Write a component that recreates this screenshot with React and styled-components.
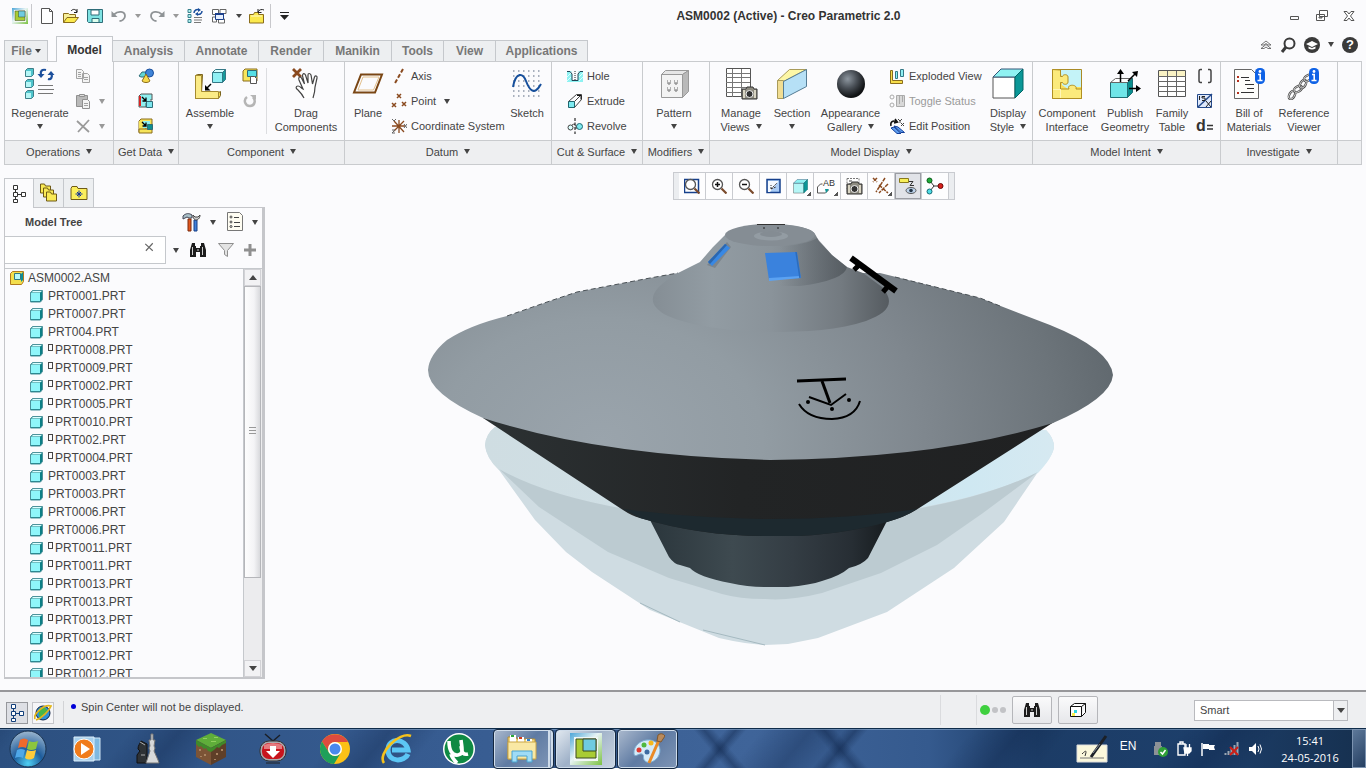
import React, { useState } from 'react';
import styled, { createGlobalStyle, css } from 'styled-components';

/* ---------- small drawings ---------- */

const Svg = ({ s = 16, w, h, box, children }) => (
  <svg width={w || s} height={h || s} viewBox={box || `0 0 ${w || s} ${h || s}`} fill="none" aria-hidden="true">
    {children}
  </svg>
);

const CreoLogo = ({ s = 16 }) => (
  <Svg s={s} box="0 0 32 32">
    <defs>
      <linearGradient id="logoEdge" x1="0" y1="0" x2="1" y2="1">
        <stop offset="0" stopColor="#4da6d8" />
        <stop offset="0.45" stopColor="#e8f4f4" />
        <stop offset="1" stopColor="#7cc242" />
      </linearGradient>
    </defs>
    <rect width="32" height="32" fill="url(#logoEdge)" />
    <path d="M4 4h24v24H4z" fill="#f1f7f3" />
    <path d="M6 6h20v19H6z" fill="#a9cc34" stroke="#3b4a20" />
    <path d="M13 6h13v12H13z" fill="#6fcbe0" stroke="#3b4a20" />
  </Svg>
);

const NewIcon = () => (
  <Svg>
    <path d="M2.5.5h8l3 3v12h-11z" fill="#fff" stroke="#555" />
    <path d="M10.5.5v3h3" stroke="#555" />
  </Svg>
);

const OpenIcon = () => (
  <Svg>
    <path d="M.5 14.5v-9h5l1 1h6v3" fill="#f7ef9a" stroke="#8a6d1c" />
    <path d="M.5 14.5 4 9.5h11.5l-4 5z" fill="#fbe94d" stroke="#8a6d1c" />
    <path d="M8 3c2-2.500 5-2 6 1m0-3v3.500h-3" stroke="#222" />
  </Svg>
);

const SaveIcon = () => (
  <Svg>
    <path d="M.5 1.500h15v13h-14l-1-1z" fill="#7fe3e3" stroke="#2f6d78" />
    <path d="M4 2h8v5H4z" fill="#fff" stroke="#2f6d78" />
    <path d="M5 10.500h7v4H5z" fill="#dfe" stroke="#2f6d78" />
  </Svg>
);

const UndoIcon = ({ flip }) => (
  <Svg>
    <g transform={flip ? 'translate(16 0) scale(-1 1)' : undefined}>
      <path d="M.5 3v6h6z" fill="#8f9396" />
      <path d="M3 6.500C7 2.500 14 3 14 8c0 3-3 5-5.500 5" stroke="#8f9396" strokeWidth="1.800" />
    </g>
  </Svg>
);

const SyncIcon = () => (
  <Svg>
    <path d="M1 1.500h3v3H1zM1 6.500h3v3H1zM1 11.500h3v3H1z" fill="#aef0f0" stroke="#39808c" />
    <path d="M7 5c0-3 3-4 5-3M15 3c0 3-3 4-5 3" stroke="#1b4f9c" strokeWidth="1.500" />
    <path d="M11 0l3 2-3 2zM11 4 8 6l3 2z" fill="#1b4f9c" />
    <path d="M7 9.500h8M7 12h8M7 14.500h7" stroke="#777" />
  </Svg>
);

const WindowsIcon = () => (
  <Svg>
    <path d="M1.500 1.500h6v5h-6zM9 1.500h6v4H9zM1.500 9h4v5h-4zM7.500 11h6v4h-6z" fill="#fff" stroke="#666" />
    <path d="M4.500 5.500h8v6h-8z" fill="#e6f0ff" stroke="#1b3f8c" />
    <path d="M4 5h9v2H4z" fill="#1b3f8c" />
  </Svg>
);

const FolderUpIcon = () => (
  <Svg>
    <path d="M.5 15V6.500h4l1-2h4v2h5V15z" fill="#fbe94d" stroke="#8a6d1c" />
    <path d="M2 8h11" stroke="#fffbd0" />
    <path d="M9 4c1-2.500 4-3 6-2M9 1v3.500h3.500" stroke="#222" />
  </Svg>
);

const RegenIcon = () => (
  <Svg w={30} h={32}>
    {[0, 11, 22].map((y) => (
      <g key={y}>
        <path d={`M.5 ${y + 2.5}l2-2h6v6l-2 2h-6z`} fill="#4fc4cc" stroke="#3f7f89" />
        <path d={`M1 ${y + 3}h5v5H1z`} fill="#b5f6f6" />
      </g>
    ))}
    <path d="M16 7c-1-4 1-6 5-5M26 5c2 4 0 7-3 6" stroke="#1b4f9c" strokeWidth="2.200" />
    <path d="M12.500 6h7L16 10zM22.500 7h7L26 3z" fill="#1b4f9c" />
    <path d="M13 17.500h15M13 21.500h16M13 25.500h15" stroke="#777" />
  </Svg>
);

const CopyIcon = () => (
  <Svg>
    <path d="M1.500 1.500h5l2 2v7h-7zM7.500 5.500h5l2 2v7h-7z" fill="#f4f4f4" stroke="#a3a3a3" />
    <path d="M3 4.500h3M3 6.500h3M3 8.500h3M9 9.500h4M9 11.500h4" stroke="#a3a3a3" />
  </Svg>
);

const PasteIcon = () => (
  <Svg>
    <path d="M1.500 2.500h11v11h-11z" fill="#b9b9b9" stroke="#909090" />
    <path d="M4.500 1.500h5v2h-5z" fill="#ddd" stroke="#909090" />
    <path d="M7.500 6.500h5l2 2v7h-7z" fill="#f4f4f4" stroke="#909090" />
    <path d="M9 10.500h4M9 12.500h4" stroke="#a3a3a3" />
  </Svg>
);

const CrossIcon = ({ s = 16, c = '#9a9a9a' }) => (
  <Svg s={s} box="0 0 16 16">
    <path d="M2 3l12 11M14 2 3 14" stroke={c} strokeWidth="1.800" />
  </Svg>
);

const ShapesIcon = () => (
  <Svg>
    <path d="M1 8l3-4h6l-2 5H3z" fill="#5fd6d6" stroke="#2f6d78" />
    <circle cx="11.500" cy="5" r="4" fill="#3f84d8" stroke="#1b4f9c" />
    <path d="M8 6l4 7c-2 2-6 2-8 0z" fill="#f6d94d" stroke="#8a6d1c" />
  </Svg>
);

const ImportIcon = ({ gold }) => (
  <Svg>
    <path d="M1 3l2-2h11v6H8v7H1z" fill={gold ? '#f6e45a' : '#8ff0f0'} stroke={gold ? '#8a6d1c' : '#555'} />
    <path d="M1 3h2v10H1z" fill={gold ? '#f6e45a' : '#d22'} />
    {gold && <path d="M1 11h13v4H1z" fill="#f6e45a" stroke="#8a6d1c" />}
    <path d="M5 3h7v7H5z" fill="#8ff0f0" />
    <path d={gold ? 'M9.500 6.500h5v5h-5z' : 'M8.500 8.500h6v6h-6z'} fill={gold ? '#0e8f8f' : '#7be6ee'} stroke="#2f6d78" />
    <path d="M4 4l4 4m0-3.500V8H4.500" stroke="#000" strokeWidth="1.300" />
  </Svg>
);

const AssembleIcon = () => (
  <Svg w={32} h={32}>
    <path d="M1.500 7.500l2-1h5l-1 18h17l2-1v4l-2 3h-23z" fill="#f6dd4a" stroke="#7b6420" />
    <path d="M1.500 7.500h6v16h17v7h-23z" fill="#fbeb86" stroke="#a58b30" />
    <path d="M18.500 4.500h10v10h-10z" fill="#8ff0f4" stroke="#347886" />
    <path d="M18.500 4.500l3-3h10l-3 3z" fill="#d9ffff" stroke="#347886" />
    <path d="M28.500 4.500l3-3v10l-3 3z" fill="#149a9a" stroke="#347886" />
    <path d="M17 16l-5 5" stroke="#000" strokeWidth="1.500" />
    <path d="M11 17v5.500h5.500z" fill="#000" />
  </Svg>
);

const AsmPartIcon = () => (
  <Svg>
    <path d="M1 3l2-2h12v12H1z" fill="#f8e65c" stroke="#8a6d1c" />
    <path d="M5.500 2.500h9v6h-9z" fill="#55dfe6" stroke="#2f6d78" />
    <path d="M8.500 8.500h4l2 2v5h-6z" fill="#fff" stroke="#555" />
  </Svg>
);

const RotateIcon = () => (
  <Svg>
    <path d="M5 4C1 7 3 13 8 13s6-6 3-9" stroke="#b5b5b5" strokeWidth="2.500" />
    <path d="M8 2h6v5z" fill="#b5b5b5" />
  </Svg>
);

const HandIcon = () => (
  <Svg w={32} h={34}>
    <path d="M3 2l8 8M11 2 3 10" stroke="#8a4a1f" strokeWidth="2.800" />
    <path
      d="M14 31c-2-4-4-6-6-8-3-2-2-4 0-4s3 2 5 3L9 13c-1-3 1-4 2.500-2l3 6-2-8c0-3 2-3 3-1l2.500 8L18 8c0-2 2-2 3 0l1.500 9 2-7c1-2 3-1 2.500 1l-2 9c0 5-1 8-2 11"
      fill="#fff"
      stroke="#444"
      strokeWidth="1.200"
    />
  </Svg>
);

const PlaneIcon = () => (
  <Svg w={32} h={32}>
    <path d="M9 6.500h21l-7 18H2z" stroke="#7a4614" strokeWidth="2" />
    <path d="M11 9h16l-5.500 13H6z" stroke="#e3c08c" />
  </Svg>
);

const AxisIcon = () => (
  <Svg>
    <path d="M12 1 4 15" stroke="#8a4a1f" strokeWidth="2" strokeDasharray="4 2" />
  </Svg>
);

const PointIcon = () => (
  <Svg>
    <path d="M6 1l4 4M10 1 6 5M1 10l4 4M5 10l-4 4M11 9l4 4M15 9l-4 4" stroke="#8a4a1f" strokeWidth="1.500" />
  </Svg>
);

const CsysIcon = () => (
  <Svg>
    <path d="M1 8h13M8 2v13M3 3l10 11M13 3 3 13" stroke="#8a4a1f" strokeWidth="1.300" />
    <path d="M1 1l2 2 2-2M13 6l3 4M16 6l-3 4M1 12h3l-3 3h3" stroke="#666" />
  </Svg>
);

const SketchIcon = () => (
  <Svg w={32} h={32}>
    {[3, 8, 13, 18, 23, 28].map((y) => (
      <path key={y} d={`M2 ${y}h29`} stroke="#8d98a8" strokeWidth="1.500" strokeDasharray="1.500 3.500" />
    ))}
    <path d="M2 19C5 3 12 5 15 13s8 16 15 3" stroke="#164f9c" strokeWidth="2" />
  </Svg>
);

const HoleIcon = () => (
  <Svg>
    <path d="M0 3h5v11H0zM11 3h5v11h-5zM5 12h6v2H5z" fill="#8ef2f2" />
    <path d="M0 9l4-4M0 13l4-4M12 9l4-4M12 13l4-4" stroke="#d7ffff" />
    <path d="M0 3.500h3l2 2.500v6.500h6V6l2-2.500h3" fill="#fbfbfd" stroke="#245" />
    <path d="M8 3v9" stroke="#222" strokeDasharray="1 1" />
  </Svg>
);

const ExtrudeIcon = () => (
  <Svg>
    <path d="M1.500 8.500h6v6h-6z" fill="#7eeaf0" stroke="#1e6670" />
    <path d="M1.500 8.500l8-7h5v5l-7 8M7.500 8.500l6-6" stroke="#444" />
    <path d="M10 2.500h4v4" stroke="#111" />
  </Svg>
);

const RevolveIcon = () => (
  <Svg>
    <circle cx="3.500" cy="9.500" r="2.500" fill="#dff" stroke="#444" />
    <circle cx="12.500" cy="8.500" r="3" fill="#7eeaf0" stroke="#1e6670" />
    <path d="M5 7c2-2 5 0 4 4" stroke="#444" />
    <path d="M8 0v16" stroke="#000" strokeDasharray="3 1.500" />
  </Svg>
);

const PatternIcon = () => (
  <Svg w={32} h={32}>
    <path d="M3.500 6.500h21v23h-21z" fill="#f3f3f3" stroke="#999" />
    <path d="M3.500 6.500l4-4h23l-6 4z" fill="#e6e6e6" stroke="#999" />
    <path d="M24.500 6.500l6-4v21l-6 6z" fill="#b9b9b9" stroke="#999" />
    {[[9, 13], [16, 13], [9, 20], [16, 20]].map(([x, y]) => (
      <path key={`${x}-${y}`} d={`M${x} ${y}h1M${x + 3} ${y}h1M${x} ${y + 2}h4M${x + 1} ${y + 3}h2`} stroke="#999" strokeWidth="1.500" />
    ))}
  </Svg>
);

const Camera = ({ x = 0, y = 0 }) => (
  <g transform={`translate(${x} ${y})`}>
    <path d="M0 3h4l1-2h6l1 2h3v10H0z" fill="#8d8b80" stroke="#333" />
    <path d="M1 4h2v8H1zM12 4h2v8h-2z" fill="#d9d5c4" />
    <circle cx="7.500" cy="8" r="3.500" fill="#333" stroke="#eee" />
  </g>
);

const ManageIcon = () => (
  <Svg w={34} h={34}>
    <path d="M2.500 1.500h24v28h-24z" fill="#fff" stroke="#555" />
    <path d="M2 6.500h24M2 10.500h24M2 15.500h24M2 20.500h24M2 25.500h24M8.500 2v28M17.500 2v28" stroke="#777" />
    <Camera x={18} y={19} />
  </Svg>
);

const SectionIcon = () => (
  <Svg w={32} h={32}>
    <path d="M1.500 12.500l12-11h17l-23 12z" fill="#fdf7a6" stroke="#a99b5a" />
    <path d="M1.500 12.500h6v18h-6z" fill="#f1dd92" stroke="#a99b5a" />
    <path d="M7.500 13.500l23-12v17l-23 12z" fill="#b6e0f6" stroke="#557c94" />
  </Svg>
);

const BallIcon = () => (
  <Svg w={32} h={32}>
    <defs>
      <radialGradient id="ball" cx="0.38" cy="0.32" r="0.65">
        <stop offset="0" stopColor="#8d969f" />
        <stop offset="0.5" stopColor="#4a5057" />
        <stop offset="1" stopColor="#101214" />
      </radialGradient>
    </defs>
    <circle cx="16" cy="16" r="14" fill="url(#ball)" />
  </Svg>
);

const ExplodedIcon = () => (
  <Svg>
    <path d="M1.500 2.500h2v10h10v3h-12z" fill="#f6dd4a" stroke="#8a6d1c" />
    <path d="M6.500 3.500h2v7h-2zM11.500 1.500h3v7h-3z" fill="#8ff0f4" stroke="#347886" />
  </Svg>
);

const ToggleIcon = () => (
  <Svg>
    <circle cx="3" cy="4" r="2" stroke="#aaa" />
    <circle cx="3" cy="12" r="2" stroke="#aaa" />
    <path d="M7.500 2.500h8v11h-8z" fill="#d8d8d8" stroke="#aaa" />
    <path d="M10.500 3v8M13.500 3v6" stroke="#aaa" />
  </Svg>
);

const EditPosIcon = () => (
  <Svg>
    <path d="M2 8C1 4 4 2 7 3.500M6 1l2.500 3-3.500 1" stroke="#111" strokeWidth="1.500" />
    <path d="M9 1l2 2 2-2M11 3v2M12 5l3 3M15 5l-3 3" stroke="#444" />
    <path d="M5 8l7 6.500h3.500L9 9z" fill="#5e9ef0" stroke="#123f9a" />
    <path d="M2 10l6 5.500h4L5 9z" fill="#5e9ef0" stroke="#123f9a" />
  </Svg>
);

const DisplayIcon = ({ s = 32, front = '#fff' }) => (
  <Svg s={s} box="0 0 32 32">
    <path d="M1 9h22v21H1z" fill={front} stroke="#555" />
    <path d="M1 9l8-8h22l-8 8z" fill="#8ff2f2" stroke="#357" />
    <path d="M23 9l8-8v21l-8 8z" fill="#0b9797" stroke="#066" />
  </Svg>
);

const PuzzleIcon = () => (
  <Svg w={32} h={32}>
    <path d="M1.500 1.500h29v29h-29z" fill="#fbe05a" stroke="#a98a26" />
    <path d="M9 2h21v17H19l-2 2-6-4V9z" fill="#c4f3f8" />
    <path
      d="M9.500 2v6.500h2C12 6 17 6 17 9v5c0 3-5 3-5.500.5h-2V21H18c-3-5 9-5 7 0h5.500v9.500h-29V1.500z"
      fill="#fbea7c"
      stroke="#b08f22"
    />
    <path d="M9.500 21v9M2 21.500h7" stroke="#fff6b8" />
  </Svg>
);

const PublishIcon = () => (
  <Svg w={32} h={32}>
    <path d="M1.500 14.500h17v15h-17z" fill="#6fe5e8" stroke="#1f6d74" />
    <path d="M1.500 14.500l5-4h17l-5 4z" fill="#fff" stroke="#666" />
    <path d="M18.500 14.500l5-4v14l-5 5z" fill="#0b8f8f" stroke="#1f6d74" />
    <path d="M11.500 14V4M19 13l8-8M20 20.500h9" stroke="#000" strokeWidth="1.500" />
    <path d="M8 6l3.500-5L15 6zM23 4l6-1-1 6zM27 17l5 3.500-5 3.500z" fill="#000" />
  </Svg>
);

const TableIcon = () => (
  <Svg w={32} h={32}>
    <path d="M2.500 2.500h27v26h-27z" fill="#fff" stroke="#555" />
    <path d="M3 3h26v5H3z" fill="#f9f2c4" />
    <path d="M2 8.500h28M2 13.500h28M2 18.500h28M2 23.500h28M11.500 3v26M20.500 3v26" stroke="#666" />
  </Svg>
);

const ParensIcon = () => (
  <Svg>
    <path d="M5 1.500H3.500q-1.500 0-1.500 2v9q0 2 1.500 2H5M11 1.500h1.500q1.500 0 1.500 2v9q0 2-1.500 2H11" stroke="#444" strokeWidth="1.500" />
  </Svg>
);

const RelationIcon = () => (
  <Svg>
    <path d="M.5 1.500h14v13H.5z" fill="#dfe9fb" stroke="#244a8c" />
    <path d="M1 14 15 1" stroke="#244a8c" strokeWidth="1.500" />
    <path d="M2.500 3v4M5 3.500h3M5 3.500V5h3v2.500H5M9 8l5 6M14 8l-5 6" stroke="#222" />
  </Svg>
);

const DimIcon = () => (
  <Svg w={18} h={20}>
    <SvgText x="0" y="15" fontSize="16" fontWeight="bold">d</SvgText>
    <path d="M11 9.500h6M11 13h6" stroke="#333" strokeWidth="1.500" />
  </Svg>
);

const InfoBadge = () => (
  <g>
    <rect x="22" y="0" width="10" height="16" rx="4.500" fill="#0f62e6" />
    <circle cx="27" cy="3.500" r="1.400" fill="#fff" />
    <path d="M25 6.500h2.200V12M24.500 12.500h5" stroke="#fff" strokeWidth="1.600" />
  </g>
);

const BomIcon = () => (
  <Svg w={32} h={32}>
    <path d="M1.500 1.500h17l7 7v22h-24z" fill="#fdfdfb" stroke="#666" />
    <path d="M8 9.500h8M12 16.500h9M14 20.500h7M8 24.500h13M12 12.500h5" stroke="#333" />
    <path d="M4 8h2v2H4zM4 12h2v2H4zM4 24h2v2H4z" fill="#b5301f" />
    <InfoBadge />
  </Svg>
);

const ChainIcon = () => (
  <Svg w={34} h={32} box="0 0 34 32">
    {[[5, 27], [11, 21], [16, 16], [21, 10]].map(([x, y], i) => (
      <g key={x} transform={`rotate(${i % 2 ? -30 : -60} ${x} ${y})`}>
        <ellipse cx={x} cy={y} rx="4.500" ry="2.600" stroke="#4c4c4c" strokeWidth="2.400" />
        <ellipse cx={x} cy={y} rx="4.500" ry="2.600" stroke="#e8e8e8" strokeWidth="0.800" />
      </g>
    ))}
    <InfoBadge />
  </Svg>
);

const TreeIcon = ({ c = '#333' }) => (
  <Svg w={14} h={18}>
    <path d="M1.500.5h4v4h-4zM1.500 7.500h4v4h-4zM1.500 14.500h4v3h-4zM9.500 7.500h4v4h-4z" fill="#fff" stroke={c} />
    <path d="M3.500 5v2M3.500 12v2M6 9.500h3" stroke={c} />
  </Svg>
);

const FoldersIcon = () => (
  <Svg w={20} h={20}>
    {[[1, 0], [4, 4], [7, 8]].map(([x, y]) => (
      <path key={x} d={`M${x + 0.5} ${y + 10}V${y + 1}h4l1 2h5v7z`} fill="#f9ea55" stroke="#6f5a17" />
    ))}
  </Svg>
);

const StarFolderIcon = () => (
  <Svg w={18} h={16}>
    <path d="M1 14.500V3.500l1-2h5l1 2h9v11z" fill="#fbee5c" stroke="#6f5a17" />
    <path d="M9 5.500v7M5.500 9h7M7 7l4 4M11 7l-4 4" stroke="#12349c" />
  </Svg>
);

const ToolsIcon = () => (
  <Svg w={20} h={20}>
    <path d="M1 4c3-3 6-3 9-1v3H7L5 5 1 7z" fill="#a9c0c8" stroke="#445" />
    <path d="M6 7h3v12H6z" fill="#e2571e" stroke="#7a2a0c" />
    <path d="M12 8h3v11h-3z" fill="#3f7fd8" stroke="#173f86" />
    <path d="M11 3c0 4 2 5 3 5s4-1 4-5l-2 2h-3z" fill="#ccc" stroke="#444" />
  </Svg>
);

const ListIcon = () => (
  <Svg w={18} h={20}>
    <path d="M1.500.5h12l3 3v15h-15z" fill="#fffdf2" stroke="#777" />
    <path d="M8 5.500h5M8 10.500h6M8 14.500h6" stroke="#444" />
    <circle cx="5" cy="5" r="1" stroke="#444" />
    <circle cx="5" cy="10" r="1" stroke="#444" />
    <circle cx="5" cy="14.500" r="1" stroke="#444" />
  </Svg>
);

const BinocularIcon = () => (
  <Svg w={18} h={16}>
    <path d="M3 1h3v3h1v11H1V8zM15 1h-3v3h-1v11h6V8zM7 6h4v4H7z" fill="#1c1c1c" />
    <path d="M3.500 5v8M13.500 5v8M9 7v2" stroke="#cfcfcf" />
  </Svg>
);

const FunnelIcon = () => (
  <Svg>
    <path d="M.5 1.500h15l-6 7v6l-3-2v-4z" fill="#e3e3e3" stroke="#8e8e8e" />
  </Svg>
);

const PlusIcon = () => (
  <Svg w={12} h={12}>
    <path d="M6 0v12M0 6h12" stroke="#909090" strokeWidth="3" />
  </Svg>
);

const CubeIcon = () => (
  <Svg w={14} h={14}>
    <path d="M.5 3.500l2-2h10v9l-2 2.500H.5z" fill="#0c7f86" stroke="#4d929b" />
    <path d="M1 4h9v8H1z" fill="#8ff6fa" />
    <path d="M1 3.500 3 2h9l-2 1.500z" fill="#dcffff" />
  </Svg>
);

const AsmIcon = () => (
  <Svg w={14} h={14}>
    <path d="M.5 2.500l2-2h11v10l-2 3H.5z" fill="#f3de4c" stroke="#b07a1e" />
    <path d="M4.500 2.500h6v6h-6z" fill="#b6f8fa" stroke="#2f7882" />
    <path d="M11 3l2-2v8l-2 2z" fill="#0c8f96" />
  </Svg>
);

const ZoomGlyph = ({ sign, frame }) => (
  <Svg>
    {frame && <path d="M.5 1.500h14v13H.5z" fill="#fff" stroke="#16408c" strokeWidth="1.500" />}
    <circle cx="6.500" cy="6.500" r="5" fill="#fff" stroke="#555" strokeWidth="1.300" />
    <path d="M10.500 10.500l5 5" stroke="#7a4a2c" strokeWidth="2.200" />
    {sign && <path d={sign === '+' ? 'M6.500 4v5M4 6.500h5' : 'M4 6.500h5'} stroke="#111" strokeWidth="1.500" />}
  </Svg>
);

const RepaintIcon = () => (
  <Svg>
    <path d="M2 1.500h13v13H2z" fill="#a9ccf6" stroke="#16408c" strokeWidth="1.500" />
    <path d="M3 3v11h2l8-10V3z" fill="#f4f9ff" />
    <path d="M6 11l6-6M6 11l5-2M6 11V7" stroke="#333" strokeDasharray="2 1" />
  </Svg>
);

const NamedViewIcon = () => (
  <Svg w={20} h={18}>
    <path d="M.5 16V10l3-3h2M.5 16h8l3-3" stroke="#555" />
    <path d="M8 12h4l-3 4z" fill="#0b9797" />
    <SvgText x="6" y="9" fontSize="9">AB</SvgText>
  </Svg>
);

const ViewCamIcon = () => (
  <Svg w={18} h={18}>
    <path d="M2 1.500h12v13H2z" fill="#fff" stroke="#777" strokeDasharray="2 1" />
    <path d="M4 4h3M4 7h3" stroke="#444" />
    <Camera x={2} y={4} />
  </Svg>
);

const DatumFilterIcon = () => (
  <Svg w={18} h={18}>
    <path d="M1 1l4 4M5 1 1 5M13 1 4 15M7 8l9 8M16 7l-9 9" stroke="#8a4a1f" strokeWidth="1.500" strokeDasharray="4 1" />
  </Svg>
);

const AnnotIcon = () => (
  <Svg w={18} h={18}>
    <path d="M.5 1.500h9v4h-9z" fill="#f7ef5a" stroke="#8a7a1c" />
    <path d="M10 4.500h4l-3 4h4" stroke="#333" />
    <ellipse cx="12" cy="13.500" rx="5" ry="3" fill="#bcd2ea" stroke="#555" />
    <circle cx="12" cy="13.500" r="1.800" fill="#234" />
  </Svg>
);

const SpinIcon = () => (
  <Svg w={18} h={18}>
    <path d="M4 4l4 5-4 5M8 9h7" stroke="#333" />
    <circle cx="3.500" cy="3.500" r="2.500" fill="#1fae3a" stroke="#0a5a1a" />
    <circle cx="3.500" cy="14.500" r="2.500" fill="#4fdde6" stroke="#136a74" />
    <circle cx="14.500" cy="9" r="2.500" fill="#d8201c" stroke="#6c0a08" />
  </Svg>
);

const GlobeIcon = () => (
  <Svg w={18} h={18}>
    <circle cx="9" cy="9" r="7" fill="#2f8fd8" stroke="#124" />
    <path d="M5 5c3-3 6-2 8 1s-3 3-4 6-5 1-4-2z" fill="#48b648" />
    <path d="M1 15C-1 10 10 0 17 2c-2 5-9 12-15 14" stroke="#e2b51b" strokeWidth="1.800" />
  </Svg>
);

const BoxPickIcon = () => (
  <Svg w={18} h={16}>
    <path d="M1.500 4.500h11v10h-11zM1.500 4.500l4-3h11l-4 3M16.500 1.500v9l-4 4" fill="#fff" stroke="#111" />
    <path d="M3 11h3v3H3z" fill="#fbf04c" />
    <path d="M5 8h3v3H5z" fill="#2fd6e0" />
  </Svg>
);

/* ---------- 3D model ---------- */

const Saucer = () => (
  <ModelSvg viewBox="265 200 1101 490" preserveAspectRatio="xMidYMid meet" role="img" aria-label="ASM0002">
    <defs>
      <radialGradient id="disc" gradientUnits="userSpaceOnUse" cx="600" cy="440" r="540" gradientTransform="translate(0 110) scale(1 0.75)">
        <stop offset="0" stopColor="#9aa4ac" />
        <stop offset="0.3" stopColor="#929ca3" />
        <stop offset="0.6" stopColor="#7f878e" />
        <stop offset="0.85" stopColor="#6c747a" />
        <stop offset="1" stopColor="#5e666c" />
      </radialGradient>
      <linearGradient id="cone" x1="0" x2="1">
        <stop offset="0" stopColor="#858e95" />
        <stop offset="0.25" stopColor="#929ca3" />
        <stop offset="0.5" stopColor="#8a939a" />
        <stop offset="0.8" stopColor="#737a80" />
        <stop offset="1" stopColor="#555b60" />
      </linearGradient>
      <linearGradient id="shade" x1="0" x2="1">
        <stop offset="0" stopColor="#4a5056" stopOpacity="0" />
        <stop offset="1" stopColor="#43494e" stopOpacity="0.6" />
      </linearGradient>
      <linearGradient id="hull" x1="0" x2="1">
        <stop offset="0" stopColor="#2c3133" />
        <stop offset="0.45" stopColor="#222425" />
        <stop offset="1" stopColor="#202122" />
      </linearGradient>
      <linearGradient id="base" x1="0" x2="1">
        <stop offset="0" stopColor="#2b363c" />
        <stop offset="0.35" stopColor="#3e4a50" />
        <stop offset="0.6" stopColor="#343d44" />
        <stop offset="0.85" stopColor="#272e34" />
        <stop offset="1" stopColor="#171c1f" />
      </linearGradient>
      <linearGradient id="rim" x1="0" x2="1">
        <stop offset="0" stopColor="#cfdde2" />
        <stop offset="0.6" stopColor="#d0e2e9" />
        <stop offset="0.85" stopColor="#cfe8f2" />
        <stop offset="1" stopColor="#d6e9f1" />
      </linearGradient>
    </defs>

    {/* glass bowl */}
    <path
      d="M495 427Q486 434 485 445Q486 457 499 470L535 520 566 552 592 572 650 610 719 638Q745 644 765 645L788 644 818 638 887 612 954 568 1004 522 1038 472Q1053 456 1054 447 1054 438 1046 430z"
      fill="#cfdce2"
    />
    <path d="M495 427Q486 434 485 445Q486 458 499 470Q560 500 640 511H900Q980 499 1038 473Q1053 457 1054 447 1054 438 1046 430z" fill="url(#rim)" />
    <path
      d="M499 469Q545 495 625 509H916Q990 496 1038 472L983 513 937 545 881 573 822 593Q790 601 765 599 740 599 722 594L669 578 608 552 539 507z"
      fill="#bccbd1"
    />
    <path d="M640 603l40 19M703 630l62 15" stroke="#a5b9c0" />

    {/* lower body */}
    <path
      d="M650 520L669 557Q674 564 680 565L690 568Q698 577 730 583 748 587 765 587H788Q810 585 822 581 840 576 849 568 862 565 868 558L887 521z"
      fill="url(#base)"
    />
    <path d="M483 418L623 510Q632 516 640 518 700 536 765 536H799Q850 533 887 522 905 517 916 510L1054 422z" fill="url(#hull)" />
    <path d="M623 509Q690 518 770 519 850 519 917 509 905 517 887 522 850 533 799 536H765Q700 536 640 518z" fill="#1d292f" />

    {/* disc */}
    <path
      d="M428 370Q429 355 447 340 470 325 507 316L550 301 577 292 650 278 678 273H880L980 298 1050 325Q1110 349 1113 375 1111 398 1053 423 940 458 770 460 600 456 483 418 428 393 428 370z"
      fill="url(#disc)"
    />
    <path d="M507 316l43-15 27-9 73-14 28-5M895 277l85 21 20 8" fill="none" stroke="#4a5156" strokeDasharray="5 3" />

    {/* dome */}
    <path
      d="M678 273L700 262 713 247 727 233Q738 225 770 224 810 225 815 234L819 241 832 255 847 267 863 273 882 287C896 303 888 313 866 321 840 330 805 332 770 332 725 331 685 325 664 314 644 302 652 288 678 273z"
      fill="url(#cone)"
    />
    <path d="M817 238L832 255 847 267Q845 280 800 286L780 286V246Q805 245 817 238z" fill="url(#shade)" />
    <ellipse cx="770" cy="235" rx="45" ry="11" fill="#858d94" />
    <ellipse cx="771" cy="236" rx="17" ry="4.500" fill="#939ca3" />
    <ellipse cx="771" cy="234" rx="11" ry="3" fill="#848c93" />
    <path d="M757 224.500h28" stroke="#333" />
    <path d="M763 228h2M777 228h2" stroke="#222" />
    <path d="M727 242l4 5-16 21-8-3z" fill="#7c858c" />
    <path d="M725 244l5 4-18 18-4-4z" fill="#3888e4" />
    <path d="M725 244l2 1-17 19-2-2z" fill="#2b66ae" />
    <path d="M765 253l32-1 4 26-32 2z" fill="#3a82dd" />
    <path d="M769 278l31-2 1 2-32 3z" fill="#5ba2f2" />
    <path d="M796 252l4 26" stroke="#2c6cbc" strokeWidth="1.500" />

    {/* handle */}
    <path d="M851 258l45 33" stroke="#000" strokeWidth="6" />
    <path d="M860 264l-6 6M889 285l-6 7" stroke="#000" strokeWidth="5" />

    {/* emblem */}
    <path d="M797 381l49-2" stroke="#000" strokeWidth="3" />
    <path d="M822 381l8 22" stroke="#000" strokeWidth="3" />
    <path d="M809 397l22 8 15-11M799 404Q808 419 832 419 855 418 860 401" stroke="#000" strokeWidth="2" fill="none" />
    <circle cx="808" cy="402" r="2" fill="#000" />
    <circle cx="832" cy="409" r="2" fill="#000" />
    <circle cx="849" cy="400" r="2" fill="#000" />
  </ModelSvg>
);

/* ---------- taskbar drawings ---------- */

const StartOrb = () => (
  <Svg s={38} box="0 0 38 38">
    <defs>
      <radialGradient id="orb" cx="0.5" cy="0.9" r="0.9">
        <stop offset="0" stopColor="#4fd0f4" />
        <stop offset="0.45" stopColor="#1d5c9c" />
        <stop offset="1" stopColor="#9db7cf" />
      </radialGradient>
    </defs>
    <circle cx="19" cy="19" r="18" fill="url(#orb)" stroke="#1a3350" />
    <path d="M11 10q4-3 8 0l-2 8q-4-2-8 0z" fill="#ee6a2c" />
    <path d="M20 11q4 2 9 0l-2 8q-5 2-9 0z" fill="#8cc63e" />
    <path d="M8 20q4-2 8 0l-2 8q-4-2-8 0z" fill="#4fa8e8" />
    <path d="M18 20q4 2 9 0l-2 8q-5 3-9 0z" fill="#fccb3c" />
  </Svg>
);

const MediaIcon = () => (
  <Svg s={30}>
    <path d="M8 4h20v22H8z" fill="#7fb9e0" stroke="#cfe6f6" />
    <path d="M2 3h20v24H2z" fill="#a8d0ec" stroke="#dceefa" />
    <circle cx="12" cy="15" r="10" fill="#f07c1c" stroke="#fff" />
    <path d="M9 9l9 6-9 6z" fill="#fff" />
  </Svg>
);

const ChessIcon = () => (
  <Svg s={34}>
    <path d="M5 31V23l3-4-2-2c0-4 2-5 3-8l6 3v19z" fill="#2e3236" stroke="#111" />
    <path d="M14 31l4-12-1-3 1-2-1-6h2V2h2v6h2l-1 6 1 2-1 3 4 9 1 3z" fill="#d7d9da" stroke="#777" />
    <path d="M8 10l5 3M9 23h4" stroke="#aaa" />
  </Svg>
);

const BlockIcon = () => (
  <Svg s={34}>
    <path d="M2 8 17 1l15 7-15 8z" fill="#5fae3a" />
    <path d="M2 8l15 8v17L2 25z" fill="#7c5436" />
    <path d="M32 8l-15 8v17l15-8z" fill="#5f3f28" />
    <path d="M2 8l15 8v4l-3-1-2-3-2 1-3-3-2 1-3-3zM32 8l-15 8v4l3-2 3-3 2 1 3-3 4-2z" fill="#3f8a2a" />
    <path d="M5 17h2v2H5zM10 22h2v2h-2zM6 24h2v1H6zM22 21h2v2h-2zM27 17h2v2h-2zM20 27h2v1h-2z" fill="#a98462" />
    <path d="M9 6h4v1H9zM17 9h5v1h-5zM20 5h4v1h-4z" fill="#8fd05e" />
  </Svg>
);

const TvIcon = () => (
  <Svg s={34}>
    <path d="M17 9 9 2M17 9l7-6" stroke="#1b1f26" strokeWidth="1.500" />
    <rect x="4" y="9" width="26" height="20" rx="9" fill="#a9a9ad" stroke="#333" />
    <rect x="6" y="11" width="22" height="16" rx="7" fill="#c8141c" />
    <path d="M8 13q9-4 18 0v4H8z" fill="#e77a7e" />
    <path d="M14 14h6v5h4l-7 7-7-7h4z" fill="#fff" />
    <path d="M10 31h14" stroke="#222" />
  </Svg>
);

const ChromeIcon = () => (
  <Svg s={32}>
    <circle cx="16" cy="16" r="15" fill="#fbc116" />
    <path d="M3 8.500A15 15 0 0 1 29 9H16a7 7 0 0 0-6 10.500z" fill="#dd4b3e" />
    <path d="M3 8.500A15 15 0 0 0 15 31l7-11.500A7 7 0 0 1 10 19.500z" fill="#1fa05a" />
    <circle cx="16" cy="16" r="7" fill="#fff" />
    <circle cx="16" cy="16" r="5.500" fill="#4a89ee" />
  </Svg>
);

const IeIcon = () => (
  <Svg s={34}>
    <path d="M28 22C25 30 8 31 8 18S26 6 28 18H12" stroke="#5cc6f4" strokeWidth="5" />
    <path d="M4 31C-3 22 19-1 31 4" stroke="#f5c21c" strokeWidth="2.600" />
  </Svg>
);

const TorrentIcon = () => (
  <Svg s={34}>
    <circle cx="17" cy="17" r="16" fill="#fff" />
    <circle cx="17" cy="17" r="14.500" fill="#0f8a43" />
    <path d="M7 9c0 9 3 15 9 14s4-6 3-15M19 14c1 8 3 9 7 8M9 22c1 4 3 6 6 9" stroke="#fff" strokeWidth="3.600" />
  </Svg>
);

const ExplorerIcon = () => (
  <Svg s={34}>
    <path d="M3 5h8l1 2h18v20H3z" fill="#f2d77c" stroke="#b58f35" />
    <path d="M5 3h6v7H5zM13 5h6v5h-6zM21 7h6v3h-6z" fill="#fff" />
    <path d="M6 3h3v2H6z" fill="#2fa83a" />
    <path d="M14 5h3v2h-3z" fill="#cf3b1f" />
    <path d="M22 7h3v2h-3z" fill="#2f80d0" />
    <path d="M3 10h28v17H3z" fill="#f9e8a4" stroke="#c9a548" />
    <path d="M7 30V19h20v11h-5v-6H12v6z" fill="#9fdcf6" stroke="#4ba3cf" />
  </Svg>
);

const PaintIcon = () => (
  <Svg s={34}>
    <path d="M3 22C2 13 11 7 19 8s12 8 9 15-11 9-14 6 0-6-3-7-7 4-8 0z" fill="#d5ebf9" stroke="#7fb0d4" />
    <circle cx="8" cy="18" r="2.500" fill="#dd3b34" />
    <circle cx="13" cy="13" r="2.500" fill="#4fb83e" />
    <circle cx="20" cy="11" r="2.500" fill="#f5b81c" />
    <circle cx="16" cy="20" r="2.500" fill="#3d6ba2" />
    <path d="M18 31L28 8" stroke="#e98a25" strokeWidth="3" />
    <path d="M26 9l1-6q4-3 7 1l-4 6z" fill="#b98a5c" stroke="#80582f" />
  </Svg>
);

const PenIcon = () => (
  <Svg w={32} h={30}>
    <path d="M1 11h30v17H1z" fill="#fbf8dc" stroke="#ddd" />
    <path d="M4 24h24" stroke="#777" />
    <path d="M6 20c4-4 5-4 3 2" stroke="#333" />
    <path d="M15 23L30 2" stroke="#1b2027" strokeWidth="3" />
    <path d="M17 19l7-9" stroke="#7f8b98" />
  </Svg>
);

const UsbIcon = () => (
  <Svg>
    <path d="M3 1h6v4H3zM2 5h8v9H2z" fill="#8c9196" />
    <circle cx="11" cy="11" r="5" fill="#2fa038" />
    <path d="M8.500 11l2 2 3-4" stroke="#fff" strokeWidth="1.500" />
  </Svg>
);

const PowerIcon = () => (
  <Svg>
    <path d="M2 3h7v11H2zM4 1h3v2H4z" stroke="#fff" strokeWidth="1.400" />
    <path d="M8 7h7v3l-2 2H9zM10 3v4M13.500 3v4M11.500 12v3" fill="#fff" stroke="#fff" strokeWidth="1.300" />
  </Svg>
);

const FlagIcon = () => (
  <Svg>
    <path d="M2 2v13" stroke="#fff" strokeWidth="1.500" />
    <path d="M3 3h6v5H3zM9 4h6l-1 2 1 3H9z" fill="#fff" />
  </Svg>
);

const SignalIcon = () => (
  <Svg>
    <path d="M1.500 12v2M4.500 10v4M7.500 7v7M10.500 4v10M13.500 1v13" stroke="#9aa6b3" strokeWidth="2" />
    <path d="M6 6l8 8M14 6l-8 8" stroke="#cf1f16" strokeWidth="2" />
  </Svg>
);

const SpeakerIcon = () => (
  <Svg>
    <path d="M1 6h3l4-4v12l-4-4H1z" fill="#fff" />
    <path d="M10 5q2 3 0 6M12 3.500q3 4.500 0 9" stroke="#fff" />
  </Svg>
);

/* ---------- data ---------- */

const TABS = [
  ['Analysis', 72],
  ['Annotate', 74],
  ['Render', 65],
  ['Manikin', 68],
  ['Tools', 52],
  ['View', 52],
  ['Applications', 92],
];

// a leading * marks a part that is placed with packaged constraints
const PARTS = [
  'PRT0001', 'PRT0007', 'PRT004', '*PRT0008', '*PRT0009', '*PRT0002', '*PRT0005', '*PRT0010',
  '*PRT002', '*PRT0004', 'PRT0003', 'PRT0003', 'PRT0006', 'PRT0006', '*PRT0011', '*PRT0011',
  '*PRT0013', '*PRT0013', '*PRT0013', '*PRT0013', '*PRT0012', '*PRT0012',
];

const VIEW_TOOLS = [
  ['Refit', <ZoomGlyph frame />],
  ['Zoom In', <ZoomGlyph sign="+" />],
  ['Zoom Out', <ZoomGlyph sign="-" />],
  ['Repaint', <RepaintIcon />],
  ['Display Style', <DisplayIcon s={15} front="#b5f6f6" />, true],
  ['Saved Orientations', <NamedViewIcon />, true],
  ['View Manager', <ViewCamIcon />],
  ['Datum Display', <DatumFilterIcon />, true],
  ['Annotation Display', <AnnotIcon />],
  ['Spin Center', <SpinIcon />],
];

const TASKS = [
  ['Media Player', <MediaIcon />],
  ['Chess', <ChessIcon />],
  ['Minecraft', <BlockIcon />],
  ['Downloader', <TvIcon />],
  ['Chrome', <ChromeIcon />],
  ['Internet Explorer', <IeIcon />],
  ['Torrent', <TorrentIcon />],
];

const Big = ({ icon, lines, caret, w }) => (
  <BigButton $w={w}>
    <BigIcon>{icon}</BigIcon>
    {lines.map((line, i) => (
      <BigLine key={line}>
        {line}
        {caret && i === 1 && <Caret $left={6} />}
      </BigLine>
    ))}
    {caret && lines.length === 1 && (
      <BigLine>
        <Caret />
      </BigLine>
    )}
  </BigButton>
);

const Small = ({ icon, text, caret, off, label }) => (
  <SmallButton $off={off} aria-label={label}>
    {icon}
    {text}
    {caret && <Caret $left={4} $off={off} />}
  </SmallButton>
);

const Group = ({ name, w, children }) => (
  <GroupBox $w={w}>
    <GroupBody>{children}</GroupBody>
    <GroupName>
      {name}
      <Caret $left={6} />
    </GroupName>
  </GroupBox>
);

const Ribbon = () => (
  <RibbonBox>
    <Group name="Operations" w={109}>
      <Big w={70} icon={<RegenIcon />} lines={['Regenerate']} caret />
      <SmallCol $w={38}>
        <Small label="Copy" icon={<CopyIcon />} />
        <Small label="Paste" icon={<PasteIcon />} caret off />
        <Small label="Delete" icon={<CrossIcon />} caret off />
      </SmallCol>
    </Group>
    <Group name="Get Data" w={65}>
      <SmallCol $w={64} $center>
        <Small label="User-Defined Feature" icon={<ShapesIcon />} />
        <Small label="Copy Geometry" icon={<ImportIcon />} />
        <Small label="Shrinkwrap" icon={<ImportIcon gold />} />
      </SmallCol>
    </Group>
    <Group name="Component" w={166}>
      <Big w={62} icon={<AssembleIcon />} lines={['Assemble']} caret />
      <SmallCol $w={18} $center>
        <Small label="Create" icon={<AsmPartIcon />} />
        <Small label="Repeat" icon={<RotateIcon />} off />
      </SmallCol>
      <Rule />
      <Big w={74} icon={<HandIcon />} lines={['Drag', 'Components']} />
    </Group>
    <Group name="Datum" w={207}>
      <Big w={46} icon={<PlaneIcon />} lines={['Plane']} />
      <SmallCol $w={113}>
        <Small icon={<AxisIcon />} text="Axis" />
        <Small icon={<PointIcon />} text="Point" caret />
        <Small icon={<CsysIcon />} text="Coordinate System" />
      </SmallCol>
      <Big w={46} icon={<SketchIcon />} lines={['Sketch']} />
    </Group>
    <Group name="Cut & Surface" w={91}>
      <SmallCol $w={90} $pad={15}>
        <Small icon={<HoleIcon />} text="Hole" />
        <Small icon={<ExtrudeIcon />} text="Extrude" />
        <Small icon={<RevolveIcon />} text="Revolve" />
      </SmallCol>
    </Group>
    <Group name="Modifiers" w={67}>
      <Big w={62} icon={<PatternIcon />} lines={['Pattern']} caret />
    </Group>
    <Group name="Model Display" w={323}>
      <Big w={62} icon={<ManageIcon />} lines={['Manage', 'Views']} caret />
      <Big w={40} icon={<SectionIcon />} lines={['Section']} caret />
      <Big w={77} icon={<BallIcon />} lines={['Appearance', 'Gallery']} caret />
      <SmallCol $w={96}>
        <Small icon={<ExplodedIcon />} text="Exploded View" />
        <Small icon={<ToggleIcon />} text="Toggle Status" off />
        <Small icon={<EditPosIcon />} text="Edit Position" />
      </SmallCol>
      <Big w={46} icon={<DisplayIcon />} lines={['Display', 'Style']} caret />
    </Group>
    <Group name="Model Intent" w={188}>
      <Big w={68} icon={<PuzzleIcon />} lines={['Component', 'Interface']} />
      <Big w={48} icon={<PublishIcon />} lines={['Publish', 'Geometry']} />
      <Big w={46} icon={<TableIcon />} lines={['Family', 'Table']} />
      <SmallCol $w={20} $center>
        <Small label="Parameters" icon={<ParensIcon />} />
        <Small label="Switch Dimensions" icon={<RelationIcon />} />
        <Small label="Relations" icon={<DimIcon />} />
      </SmallCol>
    </Group>
    <Group name="Investigate" w={117}>
      <Big w={56} icon={<BomIcon />} lines={['Bill of', 'Materials']} />
      <Big w={54} icon={<ChainIcon />} lines={['Reference', 'Viewer']} />
    </Group>
    <GroupBox $w={24}>
      <GroupBody />
      <GroupName />
    </GroupBox>
  </RibbonBox>
);

const ModelTree = () => {
  const [filter, setFilter] = useState('');
  return (
    <Side>
      <SideTabs>
        <SideTab $on aria-label="Model Tree">
          <TreeIcon />
        </SideTab>
        <SideTab aria-label="Folder Browser">
          <FoldersIcon />
        </SideTab>
        <SideTab aria-label="Favorites">
          <StarFolderIcon />
        </SideTab>
      </SideTabs>
      <SidePanel>
        <TreeHead>
          <TreeTitle>Model Tree</TreeTitle>
          <IconButton aria-label="Settings">
            <ToolsIcon />
            <Caret $left={8} />
          </IconButton>
          <IconButton aria-label="Show">
            <ListIcon />
            <Caret $left={8} />
          </IconButton>
        </TreeHead>
        <SearchRow>
          <SearchBox>
            <SearchInput aria-label="Search tree" value={filter} onChange={(e) => setFilter(e.target.value)} />
            <IconButton aria-label="Clear" onClick={() => setFilter('')}>
              <CrossIcon s={10} c="#666" />
            </IconButton>
          </SearchBox>
          <SearchTools>
            <Caret />
            <IconButton aria-label="Find">
              <BinocularIcon />
            </IconButton>
            <IconButton aria-label="Filter">
              <FunnelIcon />
            </IconButton>
            <IconButton aria-label="Add">
              <PlusIcon />
            </IconButton>
          </SearchTools>
        </SearchRow>
        <TreeBody>
          <TreeList>
            <TreeRow $root>
              <AsmIcon />
              ASM0002.ASM
            </TreeRow>
            {PARTS.map((part, i) => (
              <TreeRow key={i}>
                <CubeIcon />
                <span>
                  {part[0] === '*' && <Packaged />}
                  {part.replace('*', '')}.PRT
                </span>
              </TreeRow>
            ))}
          </TreeList>
          <ScrollBar>
            <ScrollArrow aria-label="Scroll up">
              <Caret $up />
            </ScrollArrow>
            <ScrollTrack>
              <ScrollThumb>
                <Grip />
              </ScrollThumb>
            </ScrollTrack>
            <ScrollArrow aria-label="Scroll down">
              <Caret $wide />
            </ScrollArrow>
          </ScrollBar>
        </TreeBody>
      </SidePanel>
    </Side>
  );
};

const App = () => (
  <Page>
    <GlobalStyle />
    <TitleBar>
      <Quick>
        <QuickItem $w={20}><CreoLogo /></QuickItem>
        <QuickRule />
        <QuickItem as="button" $w={28} aria-label="New"><NewIcon /></QuickItem>
        <QuickItem as="button" $w={20} aria-label="Open"><OpenIcon /></QuickItem>
        <QuickItem as="button" $w={28} aria-label="Save"><SaveIcon /></QuickItem>
        <QuickItem as="button" $w={20} aria-label="Undo"><UndoIcon /></QuickItem>
        <QuickItem as="button" $w={18} aria-label="Undo list"><Caret $off $small /></QuickItem>
        <QuickItem as="button" $w={20} aria-label="Redo"><UndoIcon flip /></QuickItem>
        <QuickItem as="button" $w={18} aria-label="Redo list"><Caret $off $small /></QuickItem>
        <QuickItem as="button" $w={20} aria-label="Regenerate"><SyncIcon /></QuickItem>
        <QuickItem as="button" $w={28} aria-label="Windows"><WindowsIcon /></QuickItem>
        <QuickItem as="button" $w={12} aria-label="Window list"><Caret $small /></QuickItem>
        <QuickItem as="button" $w={24} aria-label="Close"><FolderUpIcon /></QuickItem>
        <QuickRule />
        <QuickItem as="button" $w={24} aria-label="Customize">
          <Svg w={9} h={8}>
            <path d="M0 .5h9" stroke="#222" />
            <path d="M0 3h9L4.500 8z" fill="#222" />
          </Svg>
        </QuickItem>
      </Quick>
      <Title>ASM0002 (Active) - Creo Parametric 2.0</Title>
      <WindowButtons>
        <IconButton aria-label="Minimize">
          <Svg s={12}><path d="M1.500 6.500h8v3h-8z" stroke="#555" /></Svg>
        </IconButton>
        <IconButton aria-label="Restore">
          <Svg s={12}><path d="M3.500.5h8v6h-8zM.5 4.500h8v6h-8zM3 7h3v1H3z" fill="#fff" stroke="#555" /></Svg>
        </IconButton>
        <IconButton aria-label="Close window">
          <Svg s={12}>
            <path d="M1 1.500h3l2 2.500 2-2.500h3L7.500 6l3.500 4.500H8L6 8l-2 2.500H1L4.500 6z" fill="#fff" stroke="#555" />
          </Svg>
        </IconButton>
      </WindowButtons>
    </TitleBar>

    <TabRow>
      <FileTab>
        File
        <Caret $left={3} $small />
      </FileTab>
      <Tab $on $w={57}>Model</Tab>
      {TABS.map(([name, w]) => (
        <Tab key={name} $w={w}>{name}</Tab>
      ))}
      <HelpRow>
        <IconButton aria-label="Minimize ribbon">
          <Svg s={12}><path d="M1 6l5-4 5 4H8L6 4.500 4 6zM1 9.500l5-4 5 4H8L6 8 4 9.500z" stroke="#555" strokeWidth="0.800" /></Svg>
        </IconButton>
        <IconButton aria-label="Search">
          <Svg s={16}>
            <circle cx="9.500" cy="6.500" r="5" stroke="#3a3a3a" strokeWidth="2" />
            <path d="M6 10l-4 5" stroke="#3a3a3a" strokeWidth="3" />
          </Svg>
        </IconButton>
        <IconButton aria-label="Learning">
          <Svg s={16}>
            <circle cx="8" cy="8" r="8" fill="#3a3a3a" />
            <path d="M2 7l6-3 6 3-6 3zM4.500 9.500v2q3.500 2 7 0v-2L8 11z" fill="#fff" />
          </Svg>
        </IconButton>
        <Caret />
        <IconButton aria-label="Help">
          <HelpMark>?</HelpMark>
        </IconButton>
      </HelpRow>
    </TabRow>

    <Ribbon />

    <Main>
      <ModelTree />
      <Canvas>
        <ViewBar>
          {VIEW_TOOLS.map(([name, icon, more]) => (
            <ViewTool key={name} aria-label={name} $on={name === 'Annotation Display'} $more={more}>
              {icon}
            </ViewTool>
          ))}
        </ViewBar>
        <Saucer />
      </Canvas>
    </Main>

    <StatusBar>
      <StatusToggle $on aria-label="Navigator"><TreeIcon c="#123f7a" /></StatusToggle>
      <StatusToggle aria-label="Browser"><GlobeIcon /></StatusToggle>
      <Message>Spin Center will not be displayed.</Message>
      <StatusCell $w={36} />
      <StatusCell $w={32}>
        <Light $on />
        <Light />
        <Light />
      </StatusCell>
      <StatusButton aria-label="Find"><BinocularIcon /></StatusButton>
      <StatusButton aria-label="Box selection"><BoxPickIcon /></StatusButton>
      <SelectWrap>
        <Filter aria-label="Selection filter" defaultValue="Smart">
          <option>Smart</option>
          <option>Geometry</option>
        </Filter>
        <SelectArrow>
          <Caret $wide />
        </SelectArrow>
      </SelectWrap>
    </StatusBar>

    <TaskBar>
      <TaskItem $w={56} aria-label="Start"><StartOrb /></TaskItem>
      {TASKS.map(([name, icon]) => (
        <TaskItem key={name} $w={62} aria-label={name}>{icon}</TaskItem>
      ))}
      <OpenTasks>
        <OpenTask $stack aria-label="Explorer"><ExplorerIcon /></OpenTask>
        <OpenTask $on aria-label="Creo Parametric"><CreoLogo s={32} /></OpenTask>
        <OpenTask aria-label="Paint"><PaintIcon /></OpenTask>
      </OpenTasks>
      <Tray>
        <PenIcon />
        <Lang>EN</Lang>
        <TrayIcons>
          <UsbIcon />
          <PowerIcon />
          <FlagIcon />
          <SignalIcon />
          <SpeakerIcon />
        </TrayIcons>
        <Clock>
          <span>15:41</span>
          <span>24-05-2016</span>
        </Clock>
        <ShowDesktop aria-label="Show desktop" />
      </Tray>
    </TaskBar>
  </Page>
);

export default App;

/* ---------- styles ---------- */

const GlobalStyle = createGlobalStyle`
  * {
    box-sizing: border-box;
  }
  body {
    margin: 0;
    background: #fff;
    font-family: 'Liberation Sans', Arial, sans-serif;
    font-size: 11px;
    color: #444;
  }
  button {
    margin: 0;
    padding: 0;
    border: 0;
    background: none;
    font: inherit;
    color: inherit;
  }
  svg {
    display: block;
    flex: none;
  }
`;

const center = css`
  display: flex;
  align-items: center;
  justify-content: center;
`;

const SvgText = styled.text`
  font-family: 'Liberation Sans', Arial, sans-serif;
  fill: #333;
`;

const Page = styled.div`
  height: 100vh;
  padding-bottom: 2px;
  display: flex;
  flex-direction: column;
  white-space: nowrap;
  overflow: hidden;
`;

const Caret = styled.span`
  display: inline-block;
  flex: none;
  width: 0;
  height: 0;
  margin-left: ${({ $left }) => $left || 0}px;
  vertical-align: 2px;
  border: solid transparent;
  border-width: 5px 3px 0;
  border-color: ${({ $off }) => ($off ? '#999' : '#444')} transparent;
  ${({ $small }) => $small && 'border-width: 4px 3px 0;'}
  ${({ $wide }) => $wide && 'border-width: 5px 4px 0;'}
  ${({ $up }) => $up && 'border-width: 0 4px 5px;'}
`;

const TitleBar = styled.header`
  height: 36px;
  display: flex;
  background: #fbfbfd;
`;

const Quick = styled.div`
  display: flex;
  align-items: center;
  height: 32px;
  padding-left: 10px;
`;

const QuickItem = styled.span`
  ${center}
  width: ${({ $w }) => $w}px;
  height: 24px;
`;

const QuickRule = styled.span`
  width: 1px;
  height: 24px;
  margin: 0 1px;
  background: #c8c8cc;
`;

const Title = styled.h1`
  flex: 1;
  margin: 0;
  padding-right: 8px;
  text-align: center;
  font-size: 12px;
  line-height: 32px;
  color: #333;
`;

const WindowButtons = styled.div`
  display: flex;
  align-items: center;
  gap: 15px;
  height: 32px;
  padding-right: 11px;
`;

const IconButton = styled.button`
  ${center}
`;

const TabRow = styled.nav`
  display: flex;
  align-items: flex-end;
  height: 25px;
  padding: 0 4px;
  background: #fbfbfd;
`;

const Tab = styled.button`
  width: ${({ $w }) => $w}px;
  height: ${({ $on }) => ($on ? 26 : 21)}px;
  margin-bottom: ${({ $on }) => ($on ? -1 : 0)}px;
  border: 1px solid #c5c8cc;
  border-bottom: 0;
  border-left-width: ${({ $on }) => ($on ? 1 : 0)}px;
  background: ${({ $on }) => ($on ? '#fbfbfd' : '#edeff1')};
  color: ${({ $on }) => ($on ? '#333' : '#777')};
  font-size: 12px;
  font-weight: bold;
  z-index: 1;
`;

const FileTab = styled(Tab)`
  width: 44px;
  margin-right: 8px;
  border-left-width: 1px;
`;

const HelpRow = styled.div`
  display: flex;
  align-items: center;
  gap: 8px;
  height: 33px;
  margin-left: auto;
  padding-right: 4px;
`;

const HelpMark = styled.span`
  width: 16px;
  height: 16px;
  border-radius: 50%;
  background: #3a3a3a;
  color: #fff;
  font-size: 13px;
  font-weight: bold;
  line-height: 16px;
`;

const RibbonBox = styled.section`
  display: flex;
  padding: 0 4px;
  background: #fbfbfd;
`;

const GroupBox = styled.div`
  display: flex;
  flex-direction: column;
  flex: none;
  width: ${({ $w }) => $w}px;
  height: 104px;
  border: solid #c9cbce;
  border-width: 1px 1px 1px 0;
  &:first-child {
    width: 110px;
    border-left-width: 1px;
  }
`;

const GroupBody = styled.div`
  display: flex;
  flex: 1;
`;

const GroupName = styled.div`
  ${center}
  height: 24px;
  padding-bottom: 2px;
  border-top: 1px solid #c9cbce;
  background: #eeeff1;
`;

const BigButton = styled.button`
  display: flex;
  flex-direction: column;
  align-items: center;
  width: ${({ $w }) => $w}px;
  padding-top: 5px;
`;

const BigIcon = styled.span`
  ${center}
  height: 34px;
  margin-bottom: 5px;
`;

const BigLine = styled.span`
  line-height: 14px;
`;

const SmallCol = styled.div`
  display: flex;
  flex-direction: column;
  align-items: ${({ $center }) => ($center ? 'center' : 'flex-start')};
  width: ${({ $w }) => $w}px;
  padding-top: 2px;
  padding-left: ${({ $pad }) => $pad || 0}px;
`;

const SmallButton = styled.button`
  display: flex;
  align-items: center;
  gap: 4px;
  height: 25px;
  padding-bottom: 1px;
  color: ${({ $off }) => ($off ? '#9a9a9a' : '#444')};
`;

const Rule = styled.span`
  width: 1px;
  margin: 6px 2px 6px 7px;
  background: #dcdde0;
`;

const Main = styled.main`
  display: flex;
  flex: 1;
  min-height: 0;
  background: #fbfbfd;
`;

const Side = styled.aside`
  display: flex;
  flex-direction: column;
  width: 265px;
  padding: 13px 0 11px 4px;
`;

const SideTabs = styled.div`
  display: flex;
  height: 29px;
`;

const SideTab = styled.button`
  ${center}
  width: 30px;
  margin-bottom: ${({ $on }) => ($on ? -1 : 0)}px;
  border: 1px solid #c5c8cc;
  border-bottom: 0;
  border-left-width: ${({ $on }) => ($on ? 1 : 0)}px;
  background: ${({ $on }) => ($on ? '#fbfbfd' : '#edeff1')};
  z-index: 1;
`;

const SidePanel = styled.div`
  display: flex;
  flex-direction: column;
  flex: 1;
  min-height: 0;
  border: solid #c5c6ca;
  border-width: 1px 3px 2px 1px;
`;

const TreeHead = styled.div`
  display: flex;
  align-items: center;
  gap: 10px;
  height: 28px;
  padding: 0 4px 0 20px;
`;

const TreeTitle = styled.h2`
  flex: 1;
  margin: 0;
  font-size: 11px;
  color: #444;
`;

const SearchRow = styled.div`
  display: flex;
  height: 32px;
`;

const SearchBox = styled.div`
  display: flex;
  width: 161px;
  height: 28px;
  padding-right: 11px;
  padding-bottom: 6px;
  border: 1px solid #c5c8cc;
  border-left: 0;
  background: #fff;
`;

const SearchInput = styled.input`
  flex: 1;
  min-width: 0;
  border: 0;
  outline: 0;
  font: inherit;
  background: none;
`;

const SearchTools = styled.div`
  flex: 1;
  display: flex;
  align-items: center;
  justify-content: space-between;
  height: 28px;
  padding: 0 6px 0 7px;
`;

const TreeBody = styled.div`
  display: flex;
  flex: 1;
  min-height: 0;
  border-top: 1px solid #c5c8cc;
`;

const TreeList = styled.ul`
  flex: 1;
  margin: 0;
  padding: 0;
  overflow: hidden;
  list-style: none;
  font-size: 12px;
`;

const TreeRow = styled.li`
  display: flex;
  align-items: center;
  gap: 4px;
  height: 18px;
  padding-left: ${({ $root }) => ($root ? 5 : 25)}px;
`;

const Packaged = styled.i`
  display: inline-block;
  width: 5px;
  height: 7px;
  margin-right: 2px;
  border: 1px solid #444;
  vertical-align: 3px;
`;

const ScrollBar = styled.div`
  display: flex;
  flex-direction: column;
  width: 19px;
  padding-right: 1px;
  border-left: 1px solid #c5c8cc;
  background: #ececee;
`;

const ScrollArrow = styled.button`
  ${center}
  height: 17px;
  background: #f2f2f4;
  border: 1px solid #d2d2d6;
`;

const ScrollTrack = styled.div`
  flex: 1;
`;

const ScrollThumb = styled.div`
  ${center}
  height: 78%;
  border: 1px solid #b5b6ba;
  background: linear-gradient(90deg, #fdfdfd, #f4f4f6 60%, #d8d9dc);
`;

const Grip = styled.span`
  width: 7px;
  height: 9px;
  background: repeating-linear-gradient(#999 0 1px, transparent 1px 3px);
`;

const Canvas = styled.section`
  display: flex;
  flex: 1;
  flex-direction: column;
  align-items: center;
  min-width: 0;
  padding-top: 7px;
`;

const ViewBar = styled.div`
  display: flex;
  height: 28px;
  margin-right: 3px;
  padding: 0 5px;
  border: 1px solid #c9cbd0;
  background: #ebedf0;
`;

const ViewTool = styled.button`
  ${center}
  width: 27px;
  border-right: 1px solid #c9cbd0;
  background: #fdfdfe;
  ${({ $more }) =>
    $more &&
    css`
      background: linear-gradient(135deg, #fdfdfe 50%, #555 50%) right 2px bottom 3px / 4px 4px no-repeat #fdfdfe;
    `}
  ${({ $on }) =>
    $on &&
    css`
      background: #e1e3e8;
      box-shadow: inset 0 0 0 1px #9c9ea4;
    `}
`;

const ModelSvg = styled.svg`
  flex: 1 1 0;
  width: 100%;
  min-height: 0;
`;

const StatusBar = styled.footer`
  display: flex;
  align-items: center;
  height: 38px;
  padding: 0 18px 0 6px;
  border-top: 2px solid #97979a;
  background: #eeeff1;
`;

const StatusToggle = styled.button`
  ${center}
  width: 22px;
  height: 22px;
  margin: 6px 4px 0 0;
  border: 1px solid ${({ $on }) => ($on ? '#96989c' : '#c5c6ca')};
  background: ${({ $on }) => ($on ? '#dddfe4' : '#f6f6f8')};
`;

const Message = styled.p`
  flex: 1;
  height: 22px;
  margin: 4px 0 0 5px;
  padding-left: 7px;
  border-left: 1px solid #d2d3d6;
  line-height: 12px;
  &::before {
    content: '';
    display: inline-block;
    width: 5px;
    height: 5px;
    margin-right: 5px;
    border-radius: 50%;
    background: #0000d8;
    vertical-align: 2px;
  }
`;

const StatusCell = styled.div`
  ${center}
  gap: 2px;
  width: ${({ $w }) => $w}px;
  height: 30px;
  border-left: 1px solid #dadbde;
`;

const Light = styled.span`
  width: ${({ $on }) => ($on ? 10 : 6)}px;
  height: ${({ $on }) => ($on ? 10 : 6)}px;
  border-radius: 50%;
  background: ${({ $on }) => ($on ? '#3fd03f' : '#c2c3c6')};
`;

const StatusButton = styled.button`
  ${center}
  width: 40px;
  height: 28px;
  margin-left: 4px;
  margin-right: 2px;
  border: 1px solid #b5b6ba;
  border-radius: 2px;
  background: linear-gradient(#fafafb, #e6e7ea);
`;

const SelectWrap = styled.label`
  display: flex;
  width: 154px;
  height: 21px;
  margin-left: 94px;
  border: 1px solid #b9babe;
  background: #fff;
`;

const Filter = styled.select`
  flex: 1;
  padding: 0 5px;
  border: 0;
  appearance: none;
  background: #fff;
  font: inherit;
  color: #444;
`;

const SelectArrow = styled.span`
  ${center}
  width: 14px;
  border-left: 1px solid #b9babe;
  background: #eeeff1;
`;

const TaskBar = styled.div`
  display: flex;
  align-items: center;
  height: 40px;
  border-top: 1px solid #0f2c4a;
  box-shadow: inset 0 1px 0 rgba(160, 190, 220, 0.5);
  background:
    linear-gradient(50deg, transparent 43%, rgba(10, 30, 65, 0.4) 50%, transparent 57%) 660px 0 / 120px 40px no-repeat,
    linear-gradient(130deg, transparent 43%, rgba(10, 30, 65, 0.4) 50%, transparent 57%) 660px 0 / 120px 40px no-repeat,
    linear-gradient(50deg, transparent 42%, rgba(10, 30, 65, 0.4) 50%, transparent 58%) 780px 0 / 120px 40px no-repeat,
    linear-gradient(130deg, transparent 42%, rgba(10, 30, 65, 0.4) 50%, transparent 58%) 780px 0 / 120px 40px no-repeat,
    linear-gradient(130deg, transparent 30%, rgba(10, 30, 65, 0.3) 50%, transparent 70%) 60px 0 / 210px 40px repeat-x,
    linear-gradient(90deg, #2c5080, #365b90 30%, #3f6499 55%, #355a8e 68%, #1c3c66 76%, #1d3f6b 88%, #16304f);
`;

const TaskItem = styled.button`
  ${center}
  width: ${({ $w }) => $w}px;
  height: 38px;
`;

const OpenTasks = styled.div`
  display: flex;
  gap: 3px;
  padding-left: 4px;
`;

const OpenTask = styled.button`
  ${center}
  width: 59px;
  height: 38px;
  border: 1px solid #cfdcea;
  border-right-width: ${({ $stack }) => ($stack ? 5 : 1)}px;
  border-right-style: ${({ $stack }) => ($stack ? 'double' : 'solid')};
  outline: 1px solid #14273f;
  border-radius: 3px;
  background: ${({ $on }) =>
    $on ? 'linear-gradient(135deg, #dfe7ef, #9fb1c8 45%, #c9d4e1)' : 'linear-gradient(135deg, #a8b7cc, #5f7ba3 50%, #7d94b5)'};
`;

const Tray = styled.div`
  display: flex;
  align-items: center;
  height: 39px;
  margin-left: auto;
  color: #fff;
`;

const Lang = styled.span`
  width: 44px;
  padding: 0 4px 5px 0;
  text-align: center;
  font-size: 12px;
`;

const TrayIcons = styled.div`
  display: flex;
  gap: 8px;
`;

const Clock = styled.div`
  display: flex;
  flex-direction: column;
  align-items: center;
  width: 88px;
  padding-left: 4px;
  font-family: 'Open Sans', 'Noto Sans', sans-serif;
  font-size: 11px;
  line-height: 17px;
`;

const ShowDesktop = styled.button`
  width: 14px;
  height: 39px;
  border: 1px solid #7c93b0;
  background: linear-gradient(135deg, #5d7899, #253f62);
`;
